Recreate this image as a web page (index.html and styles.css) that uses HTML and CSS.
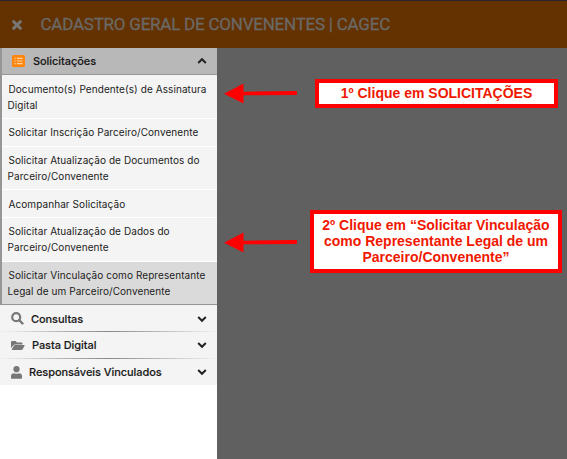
FILE: index.html
```
<!DOCTYPE html>
<html lang="pt-BR">
<head>
<meta charset="utf-8">
<title>CAGEC</title>
<link rel="stylesheet" href="styles.css">
</head>
<body>
<header class="topbar">
  <svg class="close" width="12" height="12" viewBox="0 0 12 12"><path d="M1.800 1.800l8.400 8.400M10.200 1.800l-8.400 8.400"/></svg>
  <h1><span class="title">CADASTRO GERAL DE CONVENENTES | CAGEC</span></h1>
</header>
<div class="body">
  <nav class="sidebar">
    <section class="open">
      <div class="group active">
        <svg class="ico list" width="13" height="12" viewBox="0 0 13 12"><rect width="13" height="12" rx="1.5" fill="#ff850d"/><path d="M2.4 3.4h1.3M2.4 6h1.3M2.4 8.6h1.3M4.8 3.4h5.8M4.8 6h5.8M4.8 8.6h5.8" stroke="#ffd3a6" stroke-width="1.1"/></svg>
        <span class="label l1">Solicitações</span>
        <svg class="chev" width="10" height="8" viewBox="0 0 10 8"><path d="M1.2 6L5 2.2 8.8 6"/></svg>
      </div>
      <ul class="items">
        <li><span>Documento(s) Pendente(s) de Assinatura</span><br><span class="second">Digital</span></li>
        <li class="single"><span>Solicitar Inscrição Parceiro/Convenente</span></li>
        <li class="tight"><span>Solicitar Atualização de Documentos do</span><br><span class="second">Parceiro/Convenente</span></li>
        <li><span>Acompanhar Solicitação</span></li>
        <li class="raised"><span>Solicitar Atualização de Dados do</span><br><span class="second">Parceiro/Convenente</span></li>
        <li class="selected"><span>Solicitar Vinculação como Representante</span><br><span class="second">Legal de um Parceiro/Convenente</span></li>
      </ul>
    </section>
    <div class="group">
      <svg class="ico" width="13" height="13" viewBox="0 0 13 13"><circle cx="5.2" cy="5.2" r="4" fill="none" stroke="#777" stroke-width="2.2"/><path d="M8.2 8.2l3.300 3.300" stroke="#777" stroke-width="2.4" stroke-linecap="round"/></svg>
      <span class="label l2">Consultas</span>
      <svg class="chev" width="10" height="8" viewBox="0 0 10 8"><path d="M1.2 2L5 5.8 8.8 2"/></svg>
    </div>
    <div class="group">
      <svg class="ico" width="14" height="11" viewBox="0 0 14 11"><path d="M0 8.3V2Q0 1 1 1h3.6l1.4 1.4h4.5q1 0 1 1v1H4Q3 4.400 2.400 5.300z" fill="#777"/><path d="M.5 10L3 5.600Q3.300 5 4 5h9.200q.7 0 .4.7l-2 3.600q-.4.7-1.200.7z" fill="#777"/></svg>
      <span class="label l3">Pasta Digital</span>
      <svg class="chev" width="10" height="8" viewBox="0 0 10 8"><path d="M1.200 2L5 5.800 8.800 2"/></svg>
    </div>
    <div class="group">
      <svg class="ico" width="11" height="13" viewBox="0 0 11 13"><circle cx="5.500" cy="3.200" r="3.100" fill="#777"/><path d="M0 12V10.300Q0 7.300 3 7.200q2.500 1 5 0 3 .1 3 3.100V12q0 .8-.8.8H.8Q0 12.800 0 12z" fill="#777"/></svg>
      <span class="label l4">Responsáveis Vinculados</span>
      <svg class="chev" width="10" height="8" viewBox="0 0 10 8"><path d="M1.200 2L5 5.800 8.800 2"/></svg>
    </div>
  </nav>
  <main></main>
</div>
<svg class="arrow a1" width="74" height="22" viewBox="0 0 74 22"><path d="M0 10.800L19.500 .5V8.700L73 8v4L19.500 12.300V20.500z"/></svg>
<svg class="arrow a2" width="74" height="22" viewBox="0 0 74 22"><path d="M0 10.800L19.500 .5V8.700L73 8v4L19.500 12.300V20.500z"/></svg>
<div class="callout c1"><span>1º Clique em SOLICITAÇÕES</span></div>
<div class="callout c2"><span>2º Clique em “Solicitar Vinculação<br>como Representante Legal de um<br>Parceiro/Convenente”</span></div>
</body>
</html>
```
FILE: styles.css
```
* { box-sizing: border-box; }
body { margin: 0; width: 567px; height: 459px; overflow: hidden; position: relative; display: flex; flex-direction: column; font-family: Inter, sans-serif; background: #606060; }
.topbar { height: 48px; flex: none; display: flex; align-items: center; background: #643200; border-top: 1px solid #272727; padding-left: 11px; }
.close { stroke: #777; stroke-width: 3; fill: none; }
h1 { margin: -1px 0 0 17.500px; font: 400 17px/20px Roboto, sans-serif; letter-spacing: -.23px; color: #6a6866; -webkit-text-stroke: .3px #6a6866; white-space: nowrap; }
.body { flex: 1; display: flex; }
.sidebar { width: 217px; background: #fff; }
main { flex: 1; background: #606060; }
.open { border-left: 2px solid #969696; border-bottom: 1px solid #969696; }
.group { height: 27px; display: flex; align-items: center; background: #f4f4f4; padding: 0 10px 0 11px; color: #222; }
.group + .group { border-top: 1px solid; border-image: linear-gradient(90deg, #f4f4f4, #888 50%, #f4f4f4) 1; }
.open + .group { height: 26px; padding-top: 1px; }
.group.active { background: #b8b8b8; border-bottom: 1px solid #969696; padding-left: 10px; }
.label { font-size: 11px; font-weight: 500; letter-spacing: -.07px; white-space: nowrap; color: #1a1a1a; -webkit-text-stroke: .15px #1a1a1a; margin-left: 7px; }
.label.l1 { margin-left: 8px; }
.chev { margin-left: auto; fill: none; stroke: #222; stroke-width: 2; }
.items { list-style: none; margin: 0; padding: 0; }
.items li { background: #f4f4f4; border-bottom: 1px solid #fff; padding: 6px 0 5px 6.500px; font-size: 10px; line-height: 16px; letter-spacing: .08px; color: #222; white-space: nowrap; }
.items li.single, .items li.raised { padding: 5px 0 6px 6.500px; }
.items li.tight { padding-top: 5px; }
.items li.selected { background: #dadada; border: 0; padding-top: 5px; }
.second { margin-left: -1px; }
.arrow { position: absolute; left: 224px; fill: #f00; }
.a1 { top: 83px; }
.a2 { top: 232px; }
.callout { position: absolute; background: #fff; border: 4px solid #f00; color: #f01800; font: bold 14px/16px "Liberation Sans", Arial, sans-serif; text-align: center; white-space: nowrap; display: flex; align-items: center; justify-content: center; padding-bottom: 2px; }
.c1 { left: 315px; top: 79px; width: 243px; height: 29px; }
.c2 { left: 310px; top: 210px; width: 252px; height: 63px; }
```
